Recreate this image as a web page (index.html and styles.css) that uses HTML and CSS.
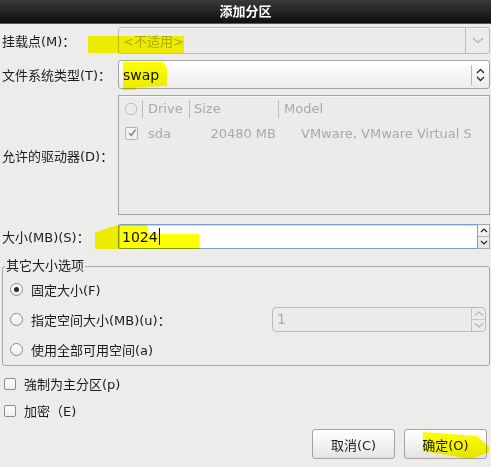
FILE: index.html
```html
<!DOCTYPE html>
<html lang="zh-CN">
<head>
<meta charset="utf-8">
<title>添加分区</title>
<link rel="stylesheet" href="styles.css">
</head>
<body>
<div class="titlebar">添加分区</div>
<div class="content">
  <div class="row r-mount">
    <span class="label">挂载点(M)：</span>
    <div class="combo combo-disabled">
      <span class="combo-text">&lt;不适用&gt;</span>
      <span class="combo-btn"><svg width="12" height="7" viewBox="0 0 12 7"><path d="M1 1 L6 5.5 L11 1" fill="none" stroke="#b4b4b4" stroke-width="1.2"/></svg></span>
    </div>
  </div>
  <div class="row r-fs">
    <span class="label">文件系统类型(T)：</span>
    <div class="combo combo-active">
      <span class="combo-text">swap</span>
      <span class="combo-sep"></span>
      <span class="combo-arrows"><svg width="9" height="14" viewBox="0 0 9 14"><path d="M1 5 L4.5 1.5 L8 5" fill="none" stroke="#2a2a2a" stroke-width="1.3"/><path d="M1 9 L4.5 12.5 L8 9" fill="none" stroke="#2a2a2a" stroke-width="1.3"/></svg></span>
    </div>
  </div>
  <div class="row r-drive">
    <span class="label">允许的驱动器(D)：</span>
    <div class="tree">
      <div class="tree-head">
        <span class="th th-check"><span class="head-box"></span></span>
        <span class="th th-drive">Drive</span>
        <span class="th th-size">Size</span>
        <span class="th th-model">Model</span>
      </div>
      <div class="tree-row">
        <span class="td td-check"><span class="cell-box"><svg width="10" height="10" viewBox="0 0 10 10"><path d="M2 5 L4.2 7.5 L8.5 1.5" fill="none" stroke="#8a8a8a" stroke-width="1.5"/></svg></span></span>
        <span class="td td-drive">sda</span>
        <span class="td td-size">20480 MB</span>
        <span class="td td-model">VMware, VMware Virtual S</span>
      </div>
    </div>
  </div>
  <div class="row r-size">
    <span class="label">大小(MB)(S)：</span>
    <div class="spin spin-focus">
      <span class="spin-text">1024<span class="caret"></span></span>
      <span class="spin-btns">
        <span class="spin-up"><svg width="8" height="5" viewBox="0 0 8 5"><path d="M1 4 L4 1 L7 4" fill="none" stroke="#222" stroke-width="1.2"/></svg></span>
        <span class="spin-down"><svg width="8" height="5" viewBox="0 0 8 5"><path d="M1 1 L4 4 L7 1" fill="none" stroke="#222" stroke-width="1.2"/></svg></span>
      </span>
    </div>
  </div>

  <fieldset class="frame">
    <legend>其它大小选项</legend>
    <div class="radio-row">
      <span class="radio checked"></span><span class="opt">固定大小(F)</span>
    </div>
    <div class="radio-row">
      <span class="radio"></span><span class="opt">指定空间大小(MB)(u)：</span>
      <div class="spin spin-disabled">
        <span class="spin-text">1</span>
        <span class="spin-btns">
          <span class="spin-up"><svg width="10" height="5" viewBox="0 0 10 5"><path d="M1 4.5 L5 1 L9 4.5" fill="none" stroke="#b4b4b4" stroke-width="1.1"/></svg></span>
          <span class="spin-down"><svg width="10" height="5" viewBox="0 0 10 5"><path d="M1 0.5 L5 4 L9 0.5" fill="none" stroke="#b4b4b4" stroke-width="1.1"/></svg></span>
        </span>
      </div>
    </div>
    <div class="radio-row">
      <span class="radio"></span><span class="opt">使用全部可用空间(a)</span>
    </div>
  </fieldset>

  <div class="check-row first"><span class="check"></span><span class="opt">強制为主分区(p)</span></div>
  <div class="check-row"><span class="check"></span><span class="opt">加密（E)</span></div>

  <div class="buttons">
    <button class="btn">取消(C)</button>
    <button class="btn">确定(O)</button>
  </div>
</div>

<div class="hl hl-1"></div>
<div class="hl hl-2"></div>
<div class="hl hl-3"></div>
<div class="hl hl-4"></div>
</body>
</html>
```
FILE: styles.css
```css
* { box-sizing: border-box; }
html, body { margin: 0; padding: 0; }
body {
  width: 491px;
  height: 467px;
  overflow: hidden;
  position: relative;
  background: #edeceb;
  font-family: "DejaVu Sans", "Noto Sans CJK SC", sans-serif;
  font-size: 13px;
  color: #1c1c1c;
}

.titlebar {
  height: 24px;
  line-height: 24px;
  text-align: center;
  color: #fff;
  font-weight: bold;
  background: linear-gradient(#3a3a3a, #0e0e0e);
  border-bottom: 1px solid #5a5a5a;
}

.content {
  padding: 3px 1px 0 2px;
}

.row { display: flex; align-items: center; }
.label { width: 116px; flex: none; white-space: nowrap; }

.r-mount { height: 27px; }
.r-fs { height: 29px; margin-top: 6px; }
.r-drive { height: 120px; margin-top: 6px; }
.r-size { height: 25px; margin-top: 9px; }

/* combo boxes */
.combo {
  flex: 1;
  height: 100%;
  display: flex;
  align-items: center;
  border-radius: 3px;
}
.combo-text { flex: 1; padding-left: 4px; }
.combo-disabled {
  border: 1px solid #bbbab8;
  background: #ecebe9;
  color: #ababab;
  box-shadow: inset 0 1px 0 #f6f6f5;
}
.combo-disabled .combo-btn {
  width: 24px;
  height: 100%;
  border-left: 1px solid #bdbcba;
  display: flex;
  align-items: center;
  justify-content: center;
}
.combo-active {
  border: 1px solid #a5a4a2;
  background: linear-gradient(#ffffff, #f4f4f3 60%, #ebebea);
  color: #111;
  font-size: 14px;
}
.combo-sep {
  width: 1px;
  height: 20px;
  background: #b9b8b6;
  margin-right: 4px;
}
.combo-arrows {
  width: 13px;
  display: flex;
  align-items: center;
}

/* drive tree */
.tree {
  flex: 1;
  height: 100%;
  border: 1px solid #a5a4a2;
  background: #ecebea;
  color: #a9a9a9;
}
.tree-head, .tree-row {
  display: grid;
  grid-template-columns: 23px 47px 89px 1fr;
}
.tree-head {
  height: 24px;
  align-items: center;
  border-top: 1px solid #f7f7f6;
}
.th {
  height: 18px;
  line-height: 18px;
  border-left: 1px solid #bdbcbb;
  padding-left: 5px;
}
.th-check { border-left: none; display: flex; align-items: center; padding-left: 6px; }
.head-box {
  width: 12px;
  height: 12px;
  border: 1px solid #bcbcbc;
  border-radius: 5px;
}
.th-drive { padding-left: 5px; }
.th-size { padding-left: 4px; }
.th-model { padding-left: 5px; }
.tree-row {
  height: 24px;
  align-items: center;
  margin-top: 1px;
}
.td-check { display: flex; padding-left: 6px; }
.cell-box {
  width: 13px;
  height: 13px;
  border: 1px solid #b2b2b2;
  border-radius: 2px;
  background: #f1f1f0;
  display: flex;
  align-items: center;
  justify-content: center;
}
.td-drive { padding-left: 6px; }
.td-size { text-align: right; padding-right: 2px; }
.td-model { padding-left: 23px; white-space: nowrap; overflow: hidden; }

/* spin buttons */
.spin {
  display: flex;
  height: 25px;
}
.spin-focus { flex: 1; }
.spin-text {
  flex: 1;
  display: flex;
  align-items: center;
  padding-left: 3px;
}
.spin-focus .spin-text {
  background: #fff;
  border: 1px solid #7b9dcf;
  border-radius: 2px 0 0 2px;
  box-shadow: inset 1px 1px 0 #c9d7ec;
  font-size: 14px;
  color: #111;
}
.caret {
  display: inline-block;
  width: 1px;
  height: 17px;
  background: #111;
  margin-left: 1px;
}
.spin-btns {
  width: 12px;
  display: flex;
  flex-direction: column;
  border: 1px solid #a8a7a5;
  border-left: none;
  background: linear-gradient(#f7f7f6, #e6e6e5);
}
.spin-up, .spin-down {
  flex: 1;
  display: flex;
  align-items: center;
  justify-content: center;
}
.spin-up { border-bottom: 1px solid #b4b3b1; }

.spin-disabled {
  width: 214px;
  margin-left: auto;
  margin-right: 3px;
  border: 1px solid #bcbbb9;
  border-radius: 4px;
  background: #ecebea;
  color: #aaaaaa;
  font-size: 14px;
}
.spin-disabled .spin-text { padding-left: 4px; }
.spin-disabled .spin-btns {
  width: 14px;
  border: none;
  border-left: 1px solid #c3c2c0;
  background: transparent;
}
.spin-disabled .spin-up { border-bottom: 1px solid #c8c7c5; }

/* frame */
.frame {
  margin: 9px 0 0 0;
  padding: 0 0 1px 0;
  border: 1px solid #a8a7a5;
  border-radius: 3px;
  min-width: 0;
}
.frame legend {
  padding: 0 1px;
  margin-left: 2px;
  line-height: 16px;
  height: 16px;
}
.radio-row {
  height: 30px;
  display: flex;
  align-items: center;
  padding-left: 7px;
}
.radio {
  width: 13px;
  height: 13px;
  border: 1px solid #8d8d8c;
  border-radius: 50%;
  background: linear-gradient(#ffffff, #ebebea);
  flex: none;
  display: flex;
  align-items: center;
  justify-content: center;
}
.radio.checked::after {
  content: "";
  width: 5px;
  height: 5px;
  border-radius: 50%;
  background: #2a2a2a;
}
.opt { margin-left: 8px; white-space: nowrap; }

/* checkboxes */
.check-row {
  height: 27px;
  display: flex;
  align-items: center;
  padding-left: 2px;
}
.check-row.first { margin-top: 4px; }
.check {
  width: 12px;
  height: 12px;
  border: 1px solid #8d8d8c;
  border-radius: 2px;
  background: linear-gradient(#ffffff, #efefee);
  flex: none;
}

/* buttons */
.buttons {
  display: flex;
  justify-content: flex-end;
  gap: 9px;
  margin-top: 5px;
  padding-right: 3px;
}
.btn {
  width: 83px;
  height: 30px;
  border: 1px solid #a4a3a1;
  border-radius: 3px;
  background: linear-gradient(#ffffff, #f3f3f2 50%, #e3e3e2);
  font-family: inherit;
  font-size: 13px;
  color: #1c1c1c;
  padding: 0;
}

/* yellow highlighter marks */
.hl {
  position: absolute;
  background: #ffff00;
  mix-blend-mode: multiply;
}
.hl-1 { left: 88px; top: 36px; width: 96px; height: 17px; }
.hl-2 {
  left: 123px; top: 62px; width: 44px; height: 28px;
  clip-path: polygon(0 0, 90% 0, 100% 20%, 100% 85%, 30% 92%, 28% 100%, 0 100%);
}
.hl-3 {
  left: 95px; top: 225px; width: 104px; height: 24px;
  clip-path: polygon(0 30%, 22% 0, 50% 0, 52% 38%, 100% 38%, 100% 100%, 0 100%);
}
.hl-4 {
  left: 423px; top: 432px; width: 66px; height: 27px;
  clip-path: polygon(0 0, 82% 15%, 100% 55%, 100% 75%, 72% 100%, 0 70%);
}
```
